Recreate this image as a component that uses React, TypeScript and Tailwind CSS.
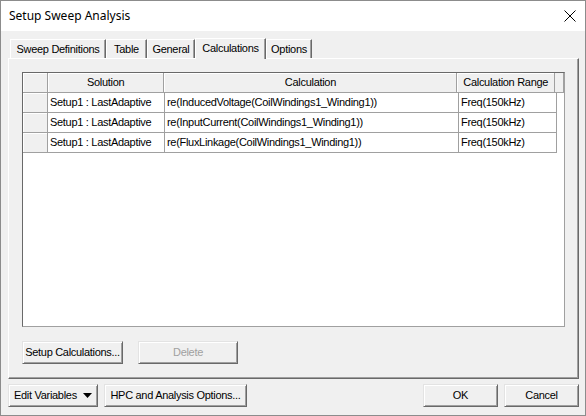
import React from "react";

const font = { fontFamily: '"Liberation Sans", Arial, sans-serif' };

function Btn({ children, className = "", disabled = false }: { children: React.ReactNode; className?: string; disabled?: boolean }) {
  return (
    <div
      className={
        "flex items-center justify-center whitespace-nowrap h-[23px] bg-[#f0f0f0] border border-t-[#e3e3e3] border-l-[#e3e3e3] border-r-[#696969] border-b-[#696969] shadow-[inset_1px_1px_0_#ffffff,inset_-1px_-1px_0_#a0a0a0] text-[11px] tracking-[-0.3px] " +
        (disabled ? "text-[#a0a0a0] " : "text-black ") +
        className
      }
    >
      {children}
    </div>
  );
}

const rows = [
  "re(InducedVoltage(CoilWindings1_Winding1))",
  "re(InputCurrent(CoilWindings1_Winding1))",
  "re(FluxLinkage(CoilWindings1_Winding1))",
];

function HeadCell({ w, children }: { w: string; children?: React.ReactNode }) {
  return (
    <div className={w + " h-[20px] flex items-center justify-center whitespace-nowrap bg-[#f0f0f0] border-r border-b border-r-[#a0a0a0] border-b-[#a0a0a0] shadow-[inset_1px_1px_0_#ffffff] text-[11px] tracking-[-0.3px]"}>
      {children}
    </div>
  );
}

const tabs: { t: string; w: string }[] = [
  { t: "Sweep Definitions", w: "w-[96px]" },
  { t: "Table", w: "w-[41px]" },
  { t: "General", w: "w-[48px]" },
  { t: "Calculations", w: "w-[71px]" },
  { t: "Options", w: "w-[46px]" },
];

export default function App() {
  return (
    <div className="w-[586px] h-[416px] bg-[#f0f0f0] border border-[#8c8c8c] flex flex-col overflow-hidden" style={font}>
      <div className="h-[30px] bg-white flex items-center justify-between pl-[8px] pr-[9px] shrink-0">
        <span className="text-[12px] text-black" style={{ fontFamily: '"Noto Sans", "Open Sans", sans-serif' }}>Setup Sweep Analysis</span>
        <svg width="12" height="12" viewBox="0 0 12 12">
          <path d="M0.5 0.5 L11.5 11.5 M11.5 0.5 L0.5 11.5" stroke="#000" strokeWidth="1" />
        </svg>
      </div>
      <div className="flex items-end h-[27px] pl-[9px] shrink-0">
        {tabs.map(({ t, w }) => {
          const sel = t === "Calculations";
          return (
            <div
              key={t}
              className={
                w +
                " flex items-center justify-center whitespace-nowrap text-[11px] tracking-[-0.3px] border-t border-l border-r border-t-white border-l-white border-r-[#696969] shadow-[inset_-1px_0_0_#a0a0a0] " +
                (sel ? "h-[21px] mb-[-1px] bg-[#f0f0f0] z-10 pb-[2px]" : "h-[19px] pt-[1px]")
              }
            >
              {t}
            </div>
          );
        })}
      </div>
      <div className="ml-[7px] w-[571px] h-[321px] border-t border-l border-t-white border-l-white border-r border-b border-r-[#696969] border-b-[#696969] shadow-[inset_-1px_-1px_0_#a0a0a0] pt-[13px] pl-[13px] flex flex-col shrink-0">
        <div className="w-[543px] h-[255px] bg-white border border-t-[#696969] border-l-[#696969] border-r-[#a0a0a0] border-b-[#a0a0a0] flex flex-col">
          <div className="flex">
            <HeadCell w="w-[25px]" />
            <HeadCell w="w-[117px]">Solution</HeadCell>
            <HeadCell w="w-[294px]">Calculation</HeadCell>
            <HeadCell w="w-[98px]">Calculation Range</HeadCell>
            <div className="w-[9px] h-[20px] bg-[#f0f0f0] border-b border-b-[#a0a0a0] border-r border-r-[#a0a0a0]" />
          </div>
          {rows.map((r) => (
            <div key={r} className="flex h-[20px] text-[11px] tracking-[-0.3px] whitespace-nowrap">
              <div className="w-[25px] bg-[#f0f0f0] border-r border-b border-r-[#a0a0a0] border-b-[#a0a0a0] shadow-[inset_1px_1px_0_#ffffff]" />
              <div className="w-[117px] border-r border-b border-[#a0a0a0] flex items-center pl-[2px]">Setup1 : LastAdaptive</div>
              <div className="w-[294px] border-r border-b border-[#a0a0a0] flex items-center pl-[2px]">{r}</div>
              <div className="w-[98px] border-r border-b border-[#a0a0a0] flex items-center pl-[2px]">Freq(150kHz)</div>
            </div>
          ))}
        </div>
        <div className="flex mt-[14px] gap-[15px]">
          <Btn className="w-[101px]">Setup Calculations...</Btn>
          <Btn className="w-[100px]" disabled>Delete</Btn>
        </div>
      </div>
      <div className="flex mt-[5px] ml-[7px] items-center">
        <Btn className="w-[90px] justify-start pl-[5px] gap-[6px]">
          <span>Edit Variables</span>
          <svg width="9" height="5" viewBox="0 0 9 5"><path d="M0 0 H9 L4.5 5 Z" fill="#000" /></svg>
        </Btn>
        <Btn className="w-[143px] ml-[6px]">HPC and Analysis Options...</Btn>
        <div className="flex-1" />
        <Btn className="w-[75px]">OK</Btn>
        <Btn className="w-[75px] ml-[6px] mr-[6px]">Cancel</Btn>
      </div>
    </div>
  );
}
